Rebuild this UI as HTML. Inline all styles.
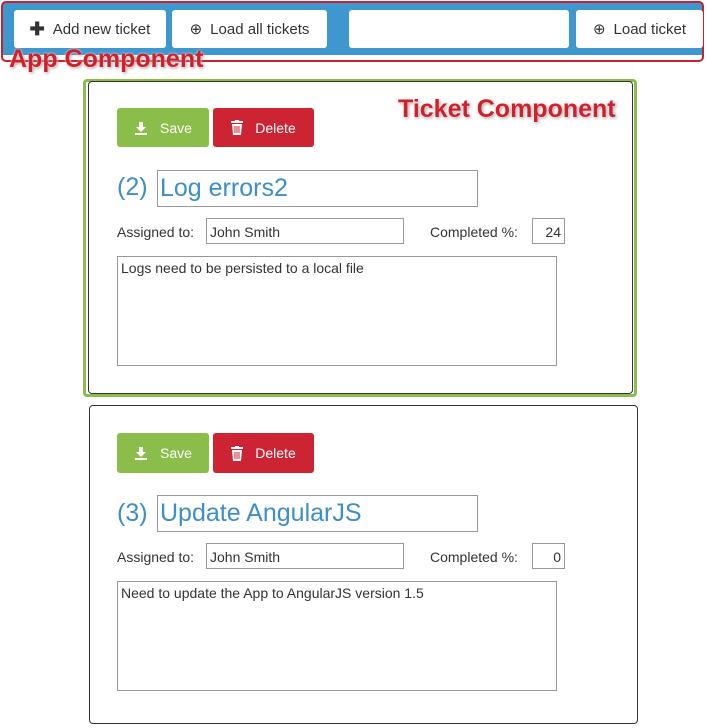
<html><head><style>
body{margin:0;width:707px;height:728px;background:#fff;font-family:"Liberation Sans",sans-serif;position:relative;overflow:hidden}
.a{position:absolute}
.bar{left:3px;top:3px;width:699px;height:52px;background:#3f97d0}
.redb{left:1px;top:1px;width:703px;height:61px;border:2px solid #c8202f;border-radius:5px;box-sizing:border-box}
.btn{background:#fff;border-radius:3px;font-size:15px;color:#333;display:flex;align-items:center;justify-content:center;gap:8px;box-sizing:border-box}
.lbl{font-size:25px;font-weight:bold;color:#d0202c;text-shadow:0 0 2px #fff,1px 1px 3px #888}
.card{border:1px solid #333;border-radius:4px;box-sizing:border-box;background:#fff}
.save{background:#8bbd4a;color:#fff;font-size:14px;border-radius:3px;display:flex;align-items:center;justify-content:center;gap:12px}
.del{background:#cc2433;color:#fff;font-size:14px;border-radius:3px;display:flex;align-items:center;justify-content:center;gap:12px}
.inp{border:1px solid #999;box-sizing:border-box;font-size:14px;color:#333;padding:3px}
.t{font-size:14px;color:#333}
.h{font-size:25px;color:#3d8fc7}
</style></head><body>
<div class="a bar"></div>
<div class="a redb"></div>
<div class="a btn" style="left:14px;top:10px;width:152px;height:38px"><b style="font-size:18px">✚</b>Add new ticket</div>
<div class="a btn" style="left:172px;top:10px;width:155px;height:38px"><span>⊕</span>Load all tickets</div>
<div class="a btn" style="left:349px;top:10px;width:220px;height:38px"></div>
<div class="a btn" style="left:576px;top:10px;width:127px;height:38px"><span>⊕</span>Load ticket</div>
<div class="a lbl" style="left:9px;top:45px">App Component</div>

<div class="a" style="left:83px;top:79px;width:554px;height:318px;border:3px solid #8bbd4a;border-radius:4px;box-sizing:border-box"></div>
<div class="a card" style="left:88px;top:81px;width:545px;height:313px"></div>
<div class="a lbl" style="left:398px;top:95px">Ticket Component</div>

<div class="a save" style="left:117px;top:108px;width:92px;height:39px"><svg width="14" height="14" viewBox="0 0 14 14"><path d="M5 1h4v5h3l-5 5-5-5h3z" fill="#fff"/><rect x="1" y="12" width="12" height="2" fill="#fff"/></svg>Save</div>
<div class="a del" style="left:213px;top:108px;width:101px;height:39px"><svg width="12" height="15" viewBox="0 0 12 15"><rect x="0" y="1" width="12" height="2" fill="#fff"/><rect x="4" y="0" width="4" height="2" fill="#fff"/><path d="M1 4h10l-1 11H2z" fill="#fff"/><path d="M4 6v7M6 6v7M8 6v7" stroke="#cc2433"/></svg>Delete</div>
<div class="a h" style="left:117px;top:173px">(2)</div>
<div class="a inp h" style="left:157px;top:170px;width:321px;height:37px;padding:0 0 0 2px;line-height:34px">Log errors2</div>
<div class="a t" style="left:117px;top:224px">Assigned to:</div>
<div class="a inp" style="left:206px;top:218px;width:198px;height:26px;padding-top:5px">John Smith</div>
<div class="a t" style="left:430px;top:224px">Completed %:</div>
<div class="a inp" style="left:532px;top:218px;width:33px;height:26px;text-align:right;padding-top:5px">24</div>
<div class="a inp" style="left:117px;top:256px;width:440px;height:110px">Logs need to be persisted to a local file</div>

<div class="a card" style="left:89px;top:405px;width:549px;height:319px"></div>
<div class="a save" style="left:117px;top:433px;width:92px;height:40px"><svg width="14" height="14" viewBox="0 0 14 14"><path d="M5 1h4v5h3l-5 5-5-5h3z" fill="#fff"/><rect x="1" y="12" width="12" height="2" fill="#fff"/></svg>Save</div>
<div class="a del" style="left:213px;top:433px;width:101px;height:40px"><svg width="12" height="15" viewBox="0 0 12 15"><rect x="0" y="1" width="12" height="2" fill="#fff"/><rect x="4" y="0" width="4" height="2" fill="#fff"/><path d="M1 4h10l-1 11H2z" fill="#fff"/><path d="M4 6v7M6 6v7M8 6v7" stroke="#cc2433"/></svg>Delete</div>
<div class="a h" style="left:117px;top:499px">(3)</div>
<div class="a inp h" style="left:157px;top:495px;width:321px;height:37px;padding:0 0 0 2px;line-height:34px">Update AngularJS</div>
<div class="a t" style="left:117px;top:549px">Assigned to:</div>
<div class="a inp" style="left:206px;top:543px;width:198px;height:26px;padding-top:5px">John Smith</div>
<div class="a t" style="left:430px;top:549px">Completed %:</div>
<div class="a inp" style="left:532px;top:543px;width:33px;height:26px;text-align:right;padding-top:5px">0</div>
<div class="a inp" style="left:117px;top:581px;width:440px;height:110px">Need to update the App to AngularJS version 1.5</div>
</body></html>
